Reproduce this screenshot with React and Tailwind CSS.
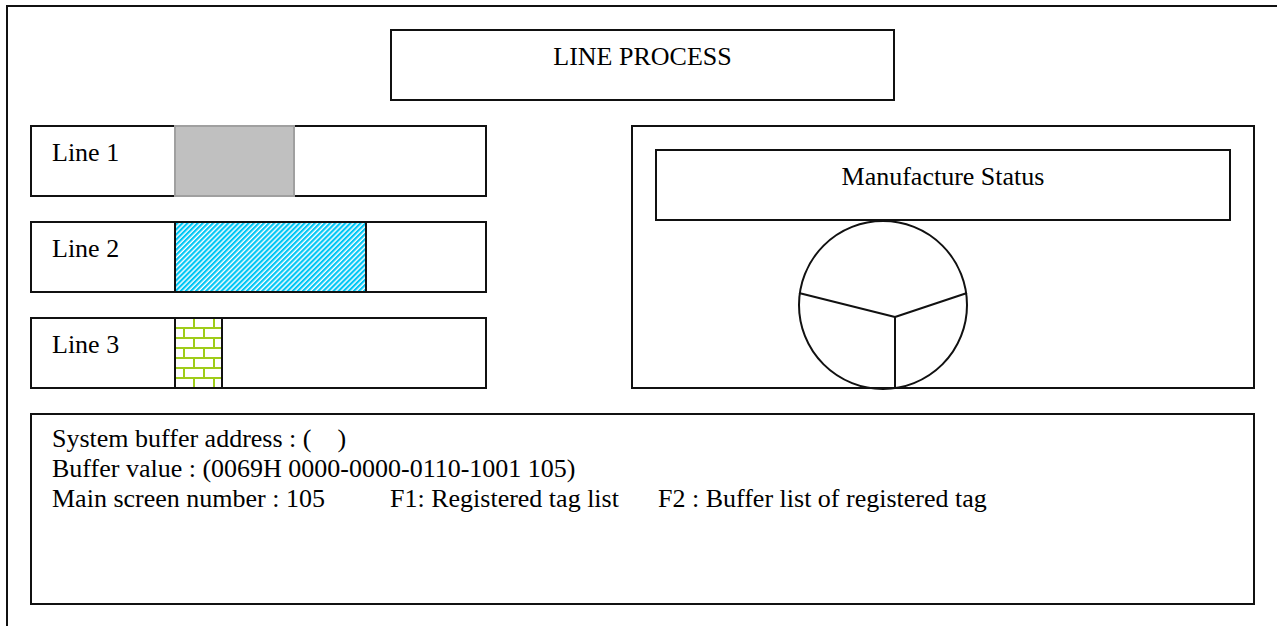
import React from "react";

const lines = [
  { label: "Line 1", kind: "gray" },
  { label: "Line 2", kind: "stripe" },
  { label: "Line 3", kind: "brick" },
];

function Bar({ kind }) {
  if (kind === "gray") {
    return <div className="-my-[2px] w-[121px] border-2 border-[#a0a0a0] bg-[#c0c0c0]" />;
  }
  if (kind === "stripe") {
    // diagonal hatch fill
    return (
      <div className="-my-[2px] w-[193px] border-2 border-[#111] bg-white">
        <svg width="189" height="68" className="block">
          <defs>
            <pattern id="hatch" width="3.6" height="3.6" patternUnits="userSpaceOnUse" patternTransform="rotate(45)">
              <rect width="3.6" height="3.6" fill="#ffffff" />
              <rect width="2.2" height="3.6" fill="#00c6f5" />
            </pattern>
          </defs>
          <rect width="189" height="68" fill="url(#hatch)" />
        </svg>
      </div>
    );
  }
  // brick fill
  return (
    <div className="-my-[2px] w-[49px] border-2 border-[#111] bg-white">
      <svg width="45" height="68" className="block">
        <defs>
          <pattern id="brick" width="20" height="20" patternUnits="userSpaceOnUse" x="-3" y="-2">
            <rect width="20" height="20" fill="#fff" />
            <g stroke="#9fcc1a" strokeWidth="2">
              <line x1="0" y1="1" x2="20" y2="1" />
              <line x1="0" y1="11" x2="20" y2="11" />
              <line x1="1" y1="1" x2="1" y2="11" />
              <line x1="11" y1="11" x2="11" y2="21" />
            </g>
          </pattern>
        </defs>
        <rect width="45" height="68" fill="url(#brick)" />
      </svg>
    </div>
  );
}

export default function App() {
  return (
    <div className="h-[626px] w-[1277px] overflow-hidden bg-white font-['Liberation_Serif',serif] text-[26px] leading-[30px] text-black">
      <div className="ml-[6px] mt-[5px] h-[660px] w-[1300px] border-2 border-[#111] pl-[22px] pt-[22px]">
        <div className="ml-[360px] h-[72px] w-[505px] border-2 border-[#111] pt-[11px] text-center">
          LINE PROCESS
        </div>

        <div className="mt-6 flex">
          <div className="flex w-[457px] flex-col gap-6">
            {lines.map((l) => (
              <div key={l.label} className="flex h-[72px] border-2 border-[#111]">
                <div className="w-[142px] pl-[20px] pt-[11px]">{l.label}</div>
                <Bar kind={l.kind} />
              </div>
            ))}
          </div>

          <div className="ml-[144px] h-[264px] w-[624px] border-2 border-[#111] pl-[22px] pt-[22px]">
            <div className="h-[72px] w-[576px] border-2 border-[#111] pt-[11px] text-center">
              Manufacture Status
            </div>
            {/* pie chart */}
            <svg width="170" height="170" className="-mt-px ml-[143px] block overflow-visible">
              <circle cx="85" cy="85" r="84" fill="none" stroke="#111" strokeWidth="2" />
              <g stroke="#111" strokeWidth="2" fill="none">
                <line x1="97" y1="97" x2="1" y2="73" />
                <line x1="97" y1="97" x2="169" y2="73" />
                <line x1="97" y1="97" x2="97" y2="169" />
              </g>
            </svg>
          </div>
        </div>

        <div className="mt-6 h-[192px] w-[1225px] border-2 border-[#111] pl-5 pt-[9px]">
          <div className="whitespace-pre">System buffer address : (    )</div>
          <div>Buffer value : (0069H 0000-0000-0110-1001 105)</div>
          <div className="flex">
            <span className="w-[338px]">Main screen number : 105</span>
            <span className="w-[268px]">F1: Registered tag list</span>
            <span>F2 : Buffer list of registered tag</span>
          </div>
        </div>
      </div>
    </div>
  );
}
